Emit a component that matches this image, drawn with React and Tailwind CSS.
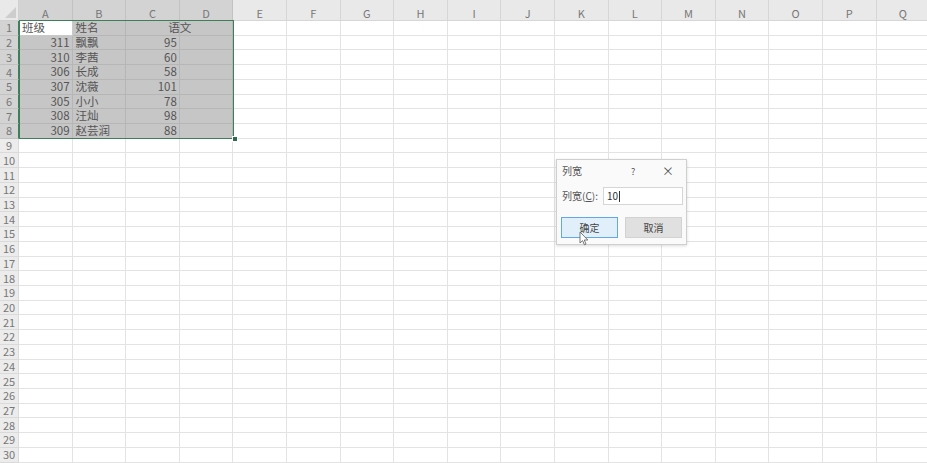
import React from 'react';

const cols = ['A', 'B', 'C', 'D', 'E', 'F', 'G', 'H', 'I', 'J', 'K', 'L', 'M', 'N', 'O', 'P', 'Q'];

const data = [
  ['班级', '姓名', '语文'],
  ['311', '飘飘', '95'],
  ['310', '李茜', '60'],
  ['306', '长成', '58'],
  ['307', '沈薇', '101'],
  ['305', '小小', '78'],
  ['308', '汪灿', '98'],
  ['309', '赵芸润', '88'],
];

const font = { fontFamily: '"Noto Sans CJK SC", "Noto Sans", sans-serif' };

const Cell = ({ r, c }) => {
  const inSel = r < 8 && c < 4;
  const active = r === 0 && c === 0;
  const row = data[r];
  let content = null;
  let align = 'justify-start pl-[3px]';
  if (row && c < 3) {
    content = row[c];
    if (r > 0 && c !== 1) align = 'justify-end pr-[2px]';
    if (r === 0 && c === 2) align = 'justify-start pl-[42px] z-10';
  }
  return (
    <div
      className={`relative flex items-center shrink-0 w-[53.6px] h-full border-r border-b whitespace-nowrap text-[11.5px] leading-none ${align} ${
        active ? 'bg-white border-[#c9c9c9] text-[#555]' : inSel ? 'bg-[#c6c6c6] border-[#b6b6b6] text-[#555]' : 'border-[#e3e3e3]'
      }`}
    >
      {content && <span className="relative z-10">{content}</span>}
    </div>
  );
};

const Dialog = () => (
  <div className="absolute left-[556px] top-[159px] w-[131px] h-[86px] bg-[#fafafa] border border-[#cfcfcf] shadow-[0_1px_3px_rgba(0,0,0,0.15)] text-[#555] text-[10px] leading-none">
    <div className="flex items-center h-[22px] pl-[5px]">
      <span className="w-[69px]">列宽</span>
      <span className="w-[31px] text-[9px]">?</span>
      <span className="text-[12px] text-[#555]">×</span>
    </div>
    <div className="flex items-center h-[28px] pl-[5px]">
      <span className="w-[41px]">
        列宽(<span className="underline">C</span>):
      </span>
      <div className="flex items-center w-[80px] h-[18px] bg-white border border-[#d6d6d6] pl-[3px] text-[#333]">
        10<span className="w-px h-[11px] bg-[#333] ml-px" />
      </div>
    </div>
    <div className="flex items-center gap-[7px] pl-[4px] pt-[7px]">
      <div className="flex items-center justify-center w-[57px] h-[21px] bg-[#e1effa] border border-[#62a8e4] text-[#444]">确定</div>
      <div className="flex items-center justify-center w-[57px] h-[21px] bg-[#e0e0e0] border border-[#d2d2d2] text-[#444]">取消</div>
    </div>
    <svg className="absolute left-[22px] top-[71px]" width="10" height="15" viewBox="0 0 10 15">
      <path d="M1 1 L1 12 L3.6 9.6 L5.4 13.8 L7 13.1 L5.3 9 L8.8 9 Z" fill="#fff" stroke="#666" strokeWidth="0.9" strokeLinejoin="round" />
    </svg>
  </div>
);

export default function App() {
  const rows = Array.from({ length: 30 }, (_, i) => i);
  return (
    <div className="relative w-[927px] h-[463px] overflow-hidden bg-white select-none" style={font}>
      <div className="flex h-[21px] bg-[#e9e9e9]">
        <div className="relative w-[19px] shrink-0 h-full border-r border-b border-[#cfcfcf]">
          <svg className="absolute right-[2px] bottom-[2px]" width="11" height="11" viewBox="0 0 11 11">
            <path d="M11 0 L11 11 L0 11 Z" fill="#cdcdcd" />
          </svg>
        </div>
        {cols.map((c, i) => (
          <div
            key={c}
            className={`flex items-end justify-center pb-[1px] shrink-0 w-[53.6px] h-full border-r border-b text-[11px] leading-none text-[#777] ${
              i < 4 ? 'bg-[#d3d3d3] border-[#c2c2c2] border-b-[#3f7e5a]' : 'border-[#d6d6d6]'
            }`}
          >
            {c}
          </div>
        ))}
      </div>
      {rows.map((r) => (
        <div key={r} className="flex h-[14.73px]">
          <div
            className={`flex items-center justify-center shrink-0 w-[19px] h-full border-b border-r text-[11px] leading-none text-[#777] ${
              r < 8 ? 'bg-[#d3d3d3] border-[#c2c2c2] border-r-[#3f7e5a]' : 'bg-[#ececec] border-[#dadada]'
            }`}
          >
            {r + 1}
          </div>
          {cols.map((c, i) => (
            <Cell key={c} r={r} c={i} />
          ))}
        </div>
      ))}
      <div className="absolute left-[19px] top-[20px] w-[215px] h-[118.5px] border border-[#3f7e5a] pointer-events-none" />
      <div className="absolute left-[232px] top-[136px] w-[4px] h-[4px] bg-[#2f6a4b] border border-white box-content" />
      <Dialog />
    </div>
  );
}
